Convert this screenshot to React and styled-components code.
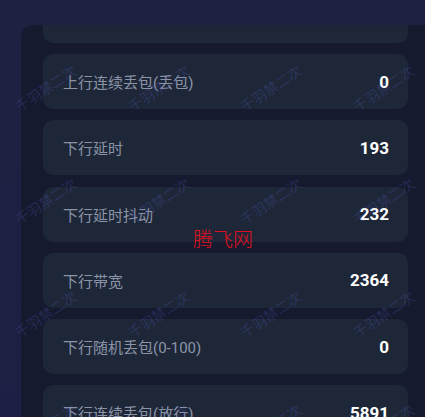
import React from 'react'
import styled, { createGlobalStyle } from 'styled-components'

const Global = createGlobalStyle`
html, body {
  margin: 0;
  padding: 0;
  background: #1e2140;
  overflow: hidden;
}
`
const Page = styled.div`
position: relative;
width: 425px;
height: 417px;
display: flex;
flex-direction: column;
background: linear-gradient(180deg, #1f2141 0%, #1d2044 100%);
font-family: Roboto, "Noto Sans CJK SC", sans-serif;
overflow: hidden;
`
const Header = styled.div`
height: 25px;
flex: none;
background: #1f2141;
`
const Body = styled.div`
flex: 1;
min-height: 0;
padding-left: 21px;
display: flex;
`
const Panel = styled.div`
flex: 1;
background: #151a2e;
border-radius: 12px 0 0 0;
overflow: hidden;
padding: 0 17px 0 22px;
`
const List = styled.div`
display: flex;
flex-direction: column;
gap: 11.3px;
margin-top: -37.3px;
`
const Card = styled.div`
height: 55px;
flex: none;
border-radius: 10px;
background: #1e2738;
display: flex;
align-items: center;
justify-content: space-between;
padding: 0 19px 0 20px;
`
const Label = styled.span`
font-size: 15px;
color: #8b94a7;
`
const Value = styled.span`
font-size: 17px;
font-weight: 700;
color: #ffffff;
`
const Marks = styled.div`
position: absolute;
left: -11px;
top: 31px;
width: 450px;
display: grid;
grid-template-columns: repeat(4, 112.5px);
grid-auto-rows: 113px;
pointer-events: none;
`
const Mark = styled.div`
display: flex;
align-items: center;
justify-content: center;
font-family: "Noto Sans CJK SC", sans-serif;
font-size: 14px;
color: rgba(105, 108, 225, 0.22);
transform: rotate(-34deg);
white-space: nowrap;
`
const Stamp = styled.div`
position: absolute;
left: 193px;
top: 224px;
font-family: "Noto Sans CJK SC", sans-serif;
font-size: 20px;
font-weight: 300;
color: #e0101f;
pointer-events: none;
`

const rows = [
  ['', ''],
  ['上行连续丢包(丢包)', '0'],
  ['下行延时', '193'],
  ['下行延时抖动', '232'],
  ['下行带宽', '2364'],
  ['下行随机丢包(0-100)', '0'],
  ['下行连续丢包(放行)', '5891'],
]

export default function App() {
  return (
    <>
      <Global />
      <Page>
        <Header />
        <Body>
          <Panel>
            <List>
              {rows.map(([label, value], i) => (
                <Card key={i}>
                  <Label>{label}</Label>
                  <Value>{value}</Value>
                </Card>
              ))}
            </List>
          </Panel>
        </Body>
        <Marks>
          {Array.from({ length: 16 }).map((_, i) => (
            <Mark key={i}>千羽禁二次</Mark>
          ))}
        </Marks>
        <Stamp>腾飞网</Stamp>
      </Page>
    </>
  )
}
